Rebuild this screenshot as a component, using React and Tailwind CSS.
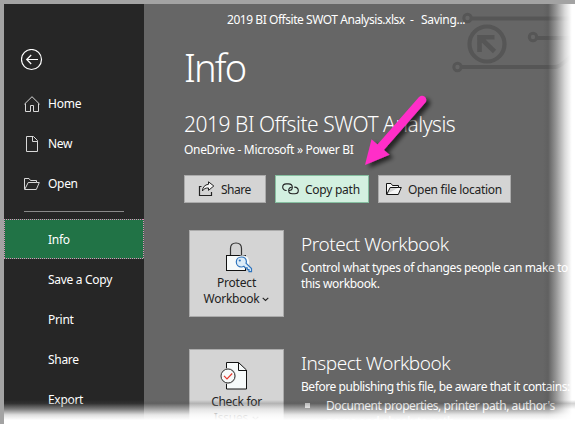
import React from "react";

const BackIcon = () => (
  <svg width="22" height="22" viewBox="0 0 22 22" fill="none" stroke="#fff">
    <circle cx="10.5" cy="10.5" r="10" strokeWidth="1.2" />
    <path d="M17 10.5H5.7M10.2 6L5.7 10.5L10.2 15" strokeWidth="1.2" />
  </svg>
);

const HomeIcon = () => (
  <svg width="16" height="16" viewBox="0 0 16 16" fill="none" stroke="#d8d8d8">
    <path d="M0.4 8.2L8 0.7L15.6 8.2" />
    <path d="M1.5 7.5V15.5H6.5V9.5H9.5V15.5H14.5V7.5" />
  </svg>
);

const NewIcon = () => (
  <svg width="16" height="16" viewBox="0 0 16 16" fill="none" stroke="#d8d8d8">
    <path d="M2.5 0.5H9.5L13.5 4.5V15.5H2.5Z" />
    <path d="M8.5 0.5V5.5H13.5" />
  </svg>
);

const FolderIcon = ({ stroke, fill }) => (
  <svg width="16" height="12" viewBox="0 0 16 12" fill={fill} stroke={stroke}>
    <path d="M0.5 11.3V0.5H5L6.5 2.5H12.5V4.5H4.2L0.7 11.5H12.3L15.3 4.5H12.5" />
  </svg>
);

const ShareIcon = () => (
  <svg width="17" height="16" viewBox="0 0 17 16" fill="none" stroke="#222">
    <path d="M3.5 5.5H1.5V14.5H13.5V11" strokeWidth="1.2" />
    <path d="M10.5 0.8L15.8 5L10.5 9.4V7C7.8 6.8 6 7.6 4.4 10C4.6 6.3 6.8 3.6 10.5 3.3Z" fill="#f6f6f6" />
  </svg>
);

const LinkIcon = () => (
  <svg width="17" height="12" viewBox="0 0 17 12" fill="none" stroke="#222" strokeWidth="1.1">
    <path d="M4.6 7.5C2.4 7.8 0.7 6 0.7 4.2C0.7 2.2 2.2 0.9 4.2 0.9H6.5C8.7 0.9 10.3 2.3 10.3 4.2C10.3 6 8.8 7.5 7 7.5" />
    <path d="M12.2 4.2C14.7 3.9 16.3 5.5 16.3 7.5C16.3 9.3 14.8 10.8 12.8 10.8H10.3C8.2 10.8 6.7 9.4 6.7 7.5C6.7 5.7 8 4.3 9.8 4.2" />
  </svg>
);

const LockIcon = () => (
  <svg width="28" height="31" viewBox="0 0 28 31" fill="none">
    <path d="M5.5 13V6.5C5.5 3 7.8 1 11 1S16.5 3 16.5 6.5V13" stroke="#333" strokeWidth="1.2" />
    <rect x="1.5" y="13.5" width="19" height="15" fill="#f7fafa" stroke="#111" />
    <circle cx="17.5" cy="20" r="6.8" fill="#f7fafa" />
    <path
      d="M16.5 15C13.4 15 11.3 17.2 11.3 20C11.3 22.8 13.5 25 16.3 25C17.3 25 18.2 24.7 18.9 24.3L20.3 25.8H22.2V27.7H24V29.7H26.5V26.6L21 21.2C21.3 20.6 21.4 20.1 21.4 19.5C21.2 17 19.2 15 16.5 15Z"
      fill="#dcecf8" stroke="#2f74bd" strokeWidth="1.2"
    />
    <circle cx="14.8" cy="18.5" r="1.1" fill="#2f74bd" />
  </svg>
);

const CheckDocIcon = () => (
  <svg width="28" height="29" viewBox="0 0 28 29" fill="none">
    <path d="M6.5 1.5H18.5L26.5 9V28H6.5Z" fill="#f7fafa" stroke="#111" />
    <path d="M18.5 1.5V9.5H26.5" stroke="#111" />
    <circle cx="8" cy="15" r="8" fill="#d4d4d4" />
    <circle cx="8" cy="15" r="7" fill="#f7fafa" stroke="#333" />
    <path d="M4 14.8L7 17.9L12.2 12.5" stroke="#e33a2f" strokeWidth="1.2" />
  </svg>
);

const Chevron = () => (
  <svg width="7" height="5" viewBox="0 0 7 5" fill="none" stroke="#222" strokeWidth="1.1">
    <path d="M0.7 0.8L3.5 3.5L6.3 0.8" />
  </svg>
);

const Circuit = () => (
  <svg className="absolute right-0 top-0" width="131" height="76" viewBox="444 0 131 76" fill="none" stroke="#565656">
    <circle cx="467.5" cy="18" r="3.7" strokeWidth="3" />
    <path d="M472 18.5H575" strokeWidth="4" />
    <circle cx="533" cy="37" r="3.7" strokeWidth="3" />
    <path d="M537 38H575" strokeWidth="4" />
    <circle cx="457.5" cy="67" r="3.7" strokeWidth="3" />
    <path d="M462 67H555C561 67 564 61 575 54" strokeWidth="4" />
    <circle cx="487" cy="44" r="17.5" strokeWidth="4.2" />
    <path d="M479.5 52V37.3H494.5M480 37.5L494.5 51.5" strokeWidth="4.6" />
  </svg>
);

const Arrow = () => (
  <svg className="absolute left-[355px] top-[88px]" width="90" height="90" viewBox="355 88 90 90">
    <defs>
      <filter id="arrowShadow" x="-20%" y="-20%" width="150%" height="150%">
        <feDropShadow dx="4" dy="3" stdDeviation="2.2" floodColor="#000" floodOpacity="0.65" />
      </filter>
    </defs>
    <g filter="url(#arrowShadow)" fill="#ff2dc8">
      <path d="M422 100L380 148" stroke="#ff2dc8" strokeWidth="8.5" strokeLinecap="round" />
      <path d="M365 165L371.5 139.3L389.5 154.8Z" />
    </g>
  </svg>
);

function NavItem({ icon, children, track }) {
  return (
    <div className="flex h-10 items-center pl-5">
      <div className="flex w-6 shrink-0">{icon}</div>
      <span className={track}>{children}</span>
    </div>
  );
}

function TileButton({ icon, children }) {
  return (
    <div className="flex h-[87px] w-[95px] shrink-0 flex-col items-center border border-[#ababab] bg-[#d4d4d4] text-[#222]">
      {icon}
      {children}
    </div>
  );
}

export default function App() {
  return (
    <div className="relative flex h-[424px] w-[575px] overflow-hidden border-l-4 border-t-4 border-[#a3a3a3] bg-[#666] font-['Noto_Sans','Open_Sans',sans-serif] text-[12px] leading-4 text-white">
      <aside className="h-[440px] w-[140px] shrink-0 bg-[#262626]">
        <div className="pl-[17px] pt-[45px]"><BackIcon /></div>
        <nav className="pt-[13px]">
          <NavItem icon={<HomeIcon />} track="tracking-[-0.2px]">Home</NavItem>
          <NavItem icon={<NewIcon />} track="tracking-[-0.3px]">New</NavItem>
          <NavItem icon={<FolderIcon stroke="#d8d8d8" fill="none" />} track="tracking-[-0.3px]">Open</NavItem>
          <div className="mb-[7px] ml-5 mt-[7px] h-px w-[100px] bg-[#8a8a8a]" />
          <div className="relative bg-[#217346]">
            <NavItem track="pt-[2px] tracking-[-0.3px]">Info</NavItem>
            <svg className="absolute inset-0" width="140" height="40" fill="none" stroke="#de8cb9">
              <path d="M0 0.5H140M0 39.5H140M0.5 0V40M139.5 0V40" strokeDasharray="1 1" />
            </svg>
          </div>
          <NavItem track="pt-[2px] tracking-[-0.3px]">Save a Copy</NavItem>
          <NavItem track="pt-[2px] tracking-[-0.3px]">Print</NavItem>
          <NavItem track="pt-[2px] tracking-[-0.3px]">Share</NavItem>
          <NavItem track="pt-[2px] tracking-[-0.3px]">Export</NavItem>
        </nav>
      </aside>
      <div className="absolute -left-1 -top-1 h-[424px] w-[575px]">
        <Circuit />
      </div>
      <main className="relative w-[431px] shrink-0">
        <div className="flex pl-[83px] pt-2">
          <span className="w-[183px] whitespace-nowrap tracking-[-0.45px]">2019 BI Offsite SWOT Analysis.xlsx</span>
          <span className="w-[11px]">-</span>
          <span className="tracking-[-0.3px]">Saving...</span>
        </div>
        <h1 className="ml-[40px] mt-[13px] whitespace-nowrap text-[38px] font-light leading-[52px] tracking-[-1.8px]">Info</h1>
        <h2 className="ml-10 mt-[18px] whitespace-nowrap text-[21px] font-light leading-[26px] tracking-[-0.47px]">2019 BI Offsite SWOT Analysis</h2>
        <p className="ml-10 mt-[5px] whitespace-nowrap tracking-[-0.32px]">OneDrive - Microsoft » Power BI</p>
        <div className="mt-[17px] flex pl-10 text-[#222]">
          <div className="flex h-7 w-[82px] items-center border border-[#ababab] bg-[#d4d4d4] pl-[13px]">
            <ShareIcon /><span className="ml-[6px] pt-[2px] tracking-[-0.5px]">Share</span>
          </div>
          <div className="ml-[9px] flex h-7 w-[94px] items-center border border-[#86bfa0] bg-[#d3f0e0] pl-[6px]">
            <LinkIcon /><span className="ml-[6px] whitespace-nowrap pt-[2px] tracking-[-0.25px]">Copy path</span>
          </div>
          <div className="ml-[9px] flex h-7 w-[133px] items-center border border-[#ababab] bg-[#d4d4d4] pl-[7px]">
            <FolderIcon stroke="#111" fill="#f6f6f6" /><span className="ml-[6px] whitespace-nowrap pt-[2px] tracking-[-0.3px]">Open file location</span>
          </div>
        </div>
        <section className="mt-[27px] flex pl-[45px]">
          <TileButton icon={<div className="ml-1 mt-[11px] h-[33px]"><LockIcon /></div>}>
            <span className="tracking-[-0.2px]">Protect</span>
            <span className="flex items-center gap-[3px] tracking-[-0.25px]">Workbook <Chevron /></span>
          </TileButton>
          <div className="ml-[17px] whitespace-nowrap">
            <h3 className="mt-[2px] text-[19px] font-light leading-[24px] tracking-[-0.45px]">Protect Workbook</h3>
            <p className="mt-[4px] tracking-[-0.37px]">Control what types of changes people can make to</p>
            <p className="tracking-[-0.34px]">this workbook.</p>
          </div>
        </section>
        <section className="mt-8 flex pl-[45px]">
          <TileButton icon={<div className="mr-[6px] mt-[11px] h-[33px]"><CheckDocIcon /></div>}>
            <span className="tracking-[-0.3px]">Check for</span>
            <span className="flex items-center gap-1 tracking-[-0.2px]">Issues <Chevron /></span>
          </TileButton>
          <div className="ml-[17px] whitespace-nowrap">
            <h3 className="mt-[2px] text-[19px] font-light leading-[24px] tracking-[-0.45px]">Inspect Workbook</h3>
            <p className="mt-[4px] tracking-[-0.43px]">Before publishing this file, be aware that it contains:</p>
            <div className="mt-[3px] flex">
              <div className="ml-1 mt-[5px] h-[5px] w-[5px] bg-[#ddd]" />
              <p className="ml-4 leading-4 tracking-[-0.44px]">Document properties, printer path, author's<br />name and absolute path</p>
            </div>
          </div>
        </section>
      </main>
      <div className="absolute -left-1 -top-1 h-[424px] w-[575px]">
        <Arrow />
        <div className="absolute right-0 top-0 h-full w-8 bg-[linear-gradient(to_right,transparent_0%,rgba(80,80,80,0.25)_16%,rgba(255,255,255,0.3)_40%,rgba(255,255,255,0.75)_68%,#fff_90%)]" />
        <div className="absolute bottom-0 left-0 h-[24px] w-full bg-[linear-gradient(to_bottom,transparent_0%,rgba(80,80,80,0.25)_14%,rgba(255,255,255,0.4)_38%,rgba(255,255,255,0.85)_62%,#fff_84%)]" />
      </div>
    </div>
  );
}
